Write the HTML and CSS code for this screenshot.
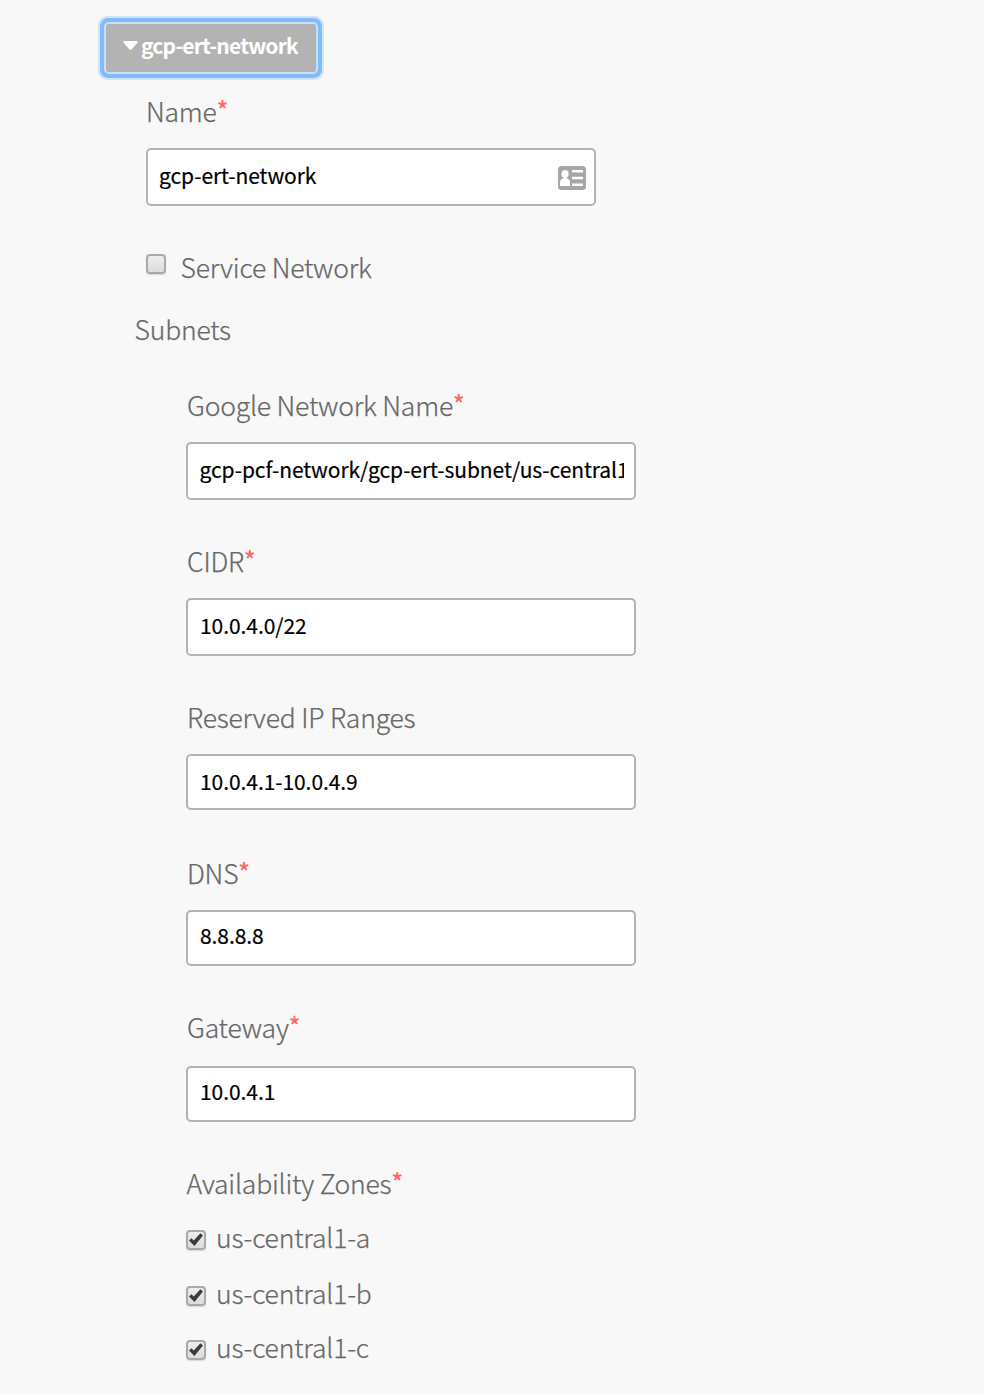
FILE: index.html
```html
<!DOCTYPE html>
<html lang="en">
<head>
<meta charset="utf-8">
<title>Create Networks</title>
<link rel="stylesheet" href="styles.css">
</head>
<body>
<svg class="defs" width="0" height="0" aria-hidden="true">
  <symbol id="check" viewBox="0 0 20 20"><path d="M3 10.600 5.400 8.300 7.800 10.600 14.400 3.200 17 5.600 8.400 16Z" fill="#3b3b3b"/></symbol>
</svg>
<form class="network">
  <button type="button" class="toggle">
    <svg class="caret" width="15" height="10" viewBox="0 0 15 10"><path d="M1 0H14Q15.2.6 14.4 1.8L8.700 8.200Q7.500 9.500 6.300 8.200L.6 1.8Q-.2.6 1 0Z" fill="#fff"/></svg>
    <span class="toggle-text">gcp-ert-network</span>
  </button>

  <div class="field field-name">
    <label class="label">Name<span class="req">*</span></label>
    <div class="control">
      <input class="input" type="text" value="gcp-ert-network">
      <svg class="card" width="28" height="24" viewBox="0 0 28 24">
        <rect width="28" height="24" rx="3.5" fill="#a6a6a6"/>
        <ellipse cx="7" cy="8" rx="3.600" ry="4" fill="#fff"/>
        <path d="M5.600 11H8.400V12.300C10.800 12.800 12 14.200 12 16.500V20H2V16.500C2 14.200 3.200 12.800 5.600 12.300Z" fill="#fff"/>
        <path d="M14 5.300H25M14 12H25M14 18.700H25" stroke="#fff" stroke-width="2.600"/>
      </svg>
    </div>
  </div>

  <div class="service"><span class="box"></span><span>Service Network</span></div>
  <h2 class="heading">Subnets</h2>

  <div class="subnet">
    <div class="field">
      <label class="label">Google Network Name<span class="req">*</span></label>
      <input class="input path" type="text" value="gcp-pcf-network/gcp-ert-subnet/us-central1">
    </div>
    <div class="field">
      <label class="label">CIDR<span class="req">*</span></label>
      <input class="input" type="text" value="10.0.4.0/22">
    </div>
    <div class="field">
      <label class="label">Reserved IP Ranges</label>
      <input class="input short" type="text" value="10.0.4.1-10.0.4.9">
    </div>
    <div class="field">
      <label class="label">DNS<span class="req">*</span></label>
      <input class="input short raised" type="text" value="8.8.8.8">
    </div>
    <div class="field gateway">
      <label class="label">Gateway<span class="req">*</span></label>
      <input class="input short raised" type="text" value="10.0.4.1">
    </div>
    <div class="zones">
      <div class="label">Availability Zones<span class="req">*</span></div>
      <div class="zone"><span class="box"><svg class="tick"><use href="#check"/></svg></span><span>us-central1-a</span></div>
      <div class="zone second"><span class="box"><svg class="tick"><use href="#check"/></svg></span><span>us-central1-b</span></div>
      <div class="zone"><span class="box"><svg class="tick"><use href="#check"/></svg></span><span>us-central1-c</span></div>
    </div>
  </div>
</form>
</body>
</html>
```

FILE: styles.css
```css
* { box-sizing: border-box; }
body {
  margin: 0;
  background: #f8f8f8;
  color: #686868;
  font: 300 26.5px/42px "Noto Sans CJK SC", "Source Sans Pro", sans-serif;
  letter-spacing: -0.19px;
  -webkit-text-stroke: 0.25px currentColor;
}
.defs { position: absolute; }
.network {
  display: flex;
  flex-direction: column;
  height: 1394px;
  padding: 24px 0 0 106px;
  overflow: hidden;
}
.toggle {
  display: flex;
  align-items: flex-start;
  width: 210px;
  height: 48px;
  flex: none;
  margin: 0;
  padding: 0 0 0 16px;
  border: 0;
  border-radius: 3px;
  background: #b3b3b3;
  box-shadow: 0 0 0 2px #c5dff8, 0 0 0 6px #83bbf8, 0 0 0 8px #cfe4fa;
  color: #fff;
  font: 700 21px/42px "Noto Sans CJK SC", sans-serif;
  letter-spacing: -0.8px;
  -webkit-text-stroke: 0;
  white-space: nowrap;
}
.caret { flex: none; margin: 17px 3px 0 1px; }
.field { display: flex; flex-direction: column; height: 156px; flex: none; }
.field-name { margin: 18px 0 0 40px; }
.label { display: flex; height: 58px; flex: none; white-space: nowrap; }
.subnet .label { padding-left: 1px; }
.req { color: #ff6760; font-size: 24px; font-weight: 500; line-height: 37px; -webkit-text-stroke: 0; }
.control { position: relative; width: 450px; }
.input {
  display: block;
  width: 450px;
  height: 58px;
  margin: 0;
  padding: 0 10px 4px 11px;
  border: 2px solid #b3b3b3;
  border-radius: 5px;
  outline: 0;
  background: #fff;
  color: #000;
  font: 400 21px/50px "Noto Sans CJK SC", sans-serif;
  letter-spacing: -0.07px;
  -webkit-text-stroke: 0.2px #000;
}
.subnet .input { padding-left: 12px; }
.subnet .path { padding-left: 11.5px; }
.short { height: 56px; padding-bottom: 2px; }
.raised { padding-bottom: 6px; }
.card { position: absolute; right: 10px; top: 18px; }
.box {
  display: block;
  width: 20px;
  height: 20px;
  flex: none;
  border: 2px solid #a9a9a9;
  border-radius: 4px;
  background: linear-gradient(#ededed, #dcdcdc);
  box-shadow: 0 1px 1px #d8d8d8;
}
.tick { display: block; width: 20px; height: 20px; margin: -2px; }
.service { display: flex; gap: 14.5px; height: 62px; flex: none; margin-left: 40px; }
.service .box { margin-top: 8px; }
.heading { margin: 0 0 0 28.6px; height: 76px; flex: none; font-size: inherit; font-weight: inherit; }
.subnet { display: flex; flex-direction: column; margin-left: 80px; }
.gateway { margin-top: -2px; }
.gateway .label { height: 60px; }
.subnet .zones .label { height: 54px; padding-left: 0.6px; }
.zone { display: flex; gap: 10px; height: 56px; white-space: nowrap; }
.zone.second { height: 54px; }
.zone .box { margin-top: 14px; }
```
